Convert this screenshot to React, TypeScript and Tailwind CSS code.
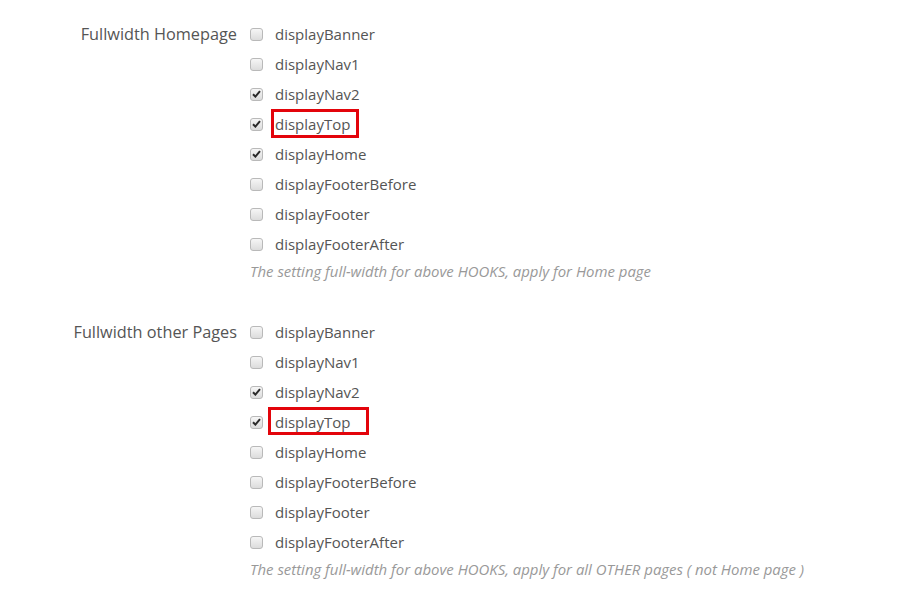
import React from 'react';

type Hook = { name: string; checked: boolean; mark?: 'a' | 'b' };

interface SectionProps {
  label: string;
  hooks: Hook[];
  help: string;
}

const CheckBox: React.FC<{ checked: boolean }> = ({ checked }) => (
  <span className="w-[13px] h-[13px] shrink-0 rounded-[3px] border border-[#b9b9b9] bg-gradient-to-b from-[#f6f6f6] to-[#dcdcdc] flex items-center justify-center">
    {checked && (
      <svg width="9" height="8" viewBox="0 0 9 8">
        <path d="M1 4.2 L3.4 6.6 L8 1.2" fill="none" stroke="#2b2b2b" strokeWidth="2" />
      </svg>
    )}
  </span>
);

const Section: React.FC<SectionProps> = ({ label, hooks, help }) => {
  return (
    <div className="flex">
      <div className="w-[237px] shrink-0 h-[30px] flex items-center justify-end text-[16.3px] text-[#555]">
        {label}
      </div>
      <div className="pl-[13px] flex flex-col">
        {hooks.map(h => (
          <div key={h.name} className="h-[30px] flex items-center gap-[12px]">
            <CheckBox checked={h.checked} />
            <span className="relative text-[15px] text-[#555]">
              {h.name}
              {/* highlight box */}
              {h.mark === 'a' && (
                <span className="absolute -left-[4px] -top-[4px] w-[88px] h-[29px] border-[3px] border-[#e3040b]"></span>
              )}
              {h.mark === 'b' && (
                <span className="absolute -left-[7px] -top-[4px] w-[101px] h-[28px] border-[3px] border-[#e3040b]"></span>
              )}
            </span>
          </div>
        ))}
        <div className="mt-[2px] h-[20px] flex items-center text-[14.95px] italic text-[#999]">{help}</div>
      </div>
    </div>
  );
};

const names = ['displayBanner', 'displayNav1', 'displayNav2', 'displayTop', 'displayHome', 'displayFooterBefore', 'displayFooter', 'displayFooterAfter'];

export default function App() {
  const home: Hook[] = names.map(n => ({
    name: n,
    checked: n === 'displayNav2' || n === 'displayTop' || n === 'displayHome',
    mark: n === 'displayTop' ? 'a' : undefined,
  }));
  const other: Hook[] = names.map(n => ({
    name: n,
    checked: n === 'displayNav2' || n === 'displayTop',
    mark: n === 'displayTop' ? 'b' : undefined,
  }));

  return (
    <div className="w-[904px] h-[589px] bg-white pt-[19px] font-['Open_Sans',sans-serif] flex flex-col gap-[36px]">
      <Section label="Fullwidth Homepage" hooks={home} help="The setting full-width for above HOOKS, apply for Home page" />
      <Section label="Fullwidth other Pages" hooks={other} help="The setting full-width for above HOOKS, apply for all OTHER pages ( not Home page )" />
    </div>
  );
}
